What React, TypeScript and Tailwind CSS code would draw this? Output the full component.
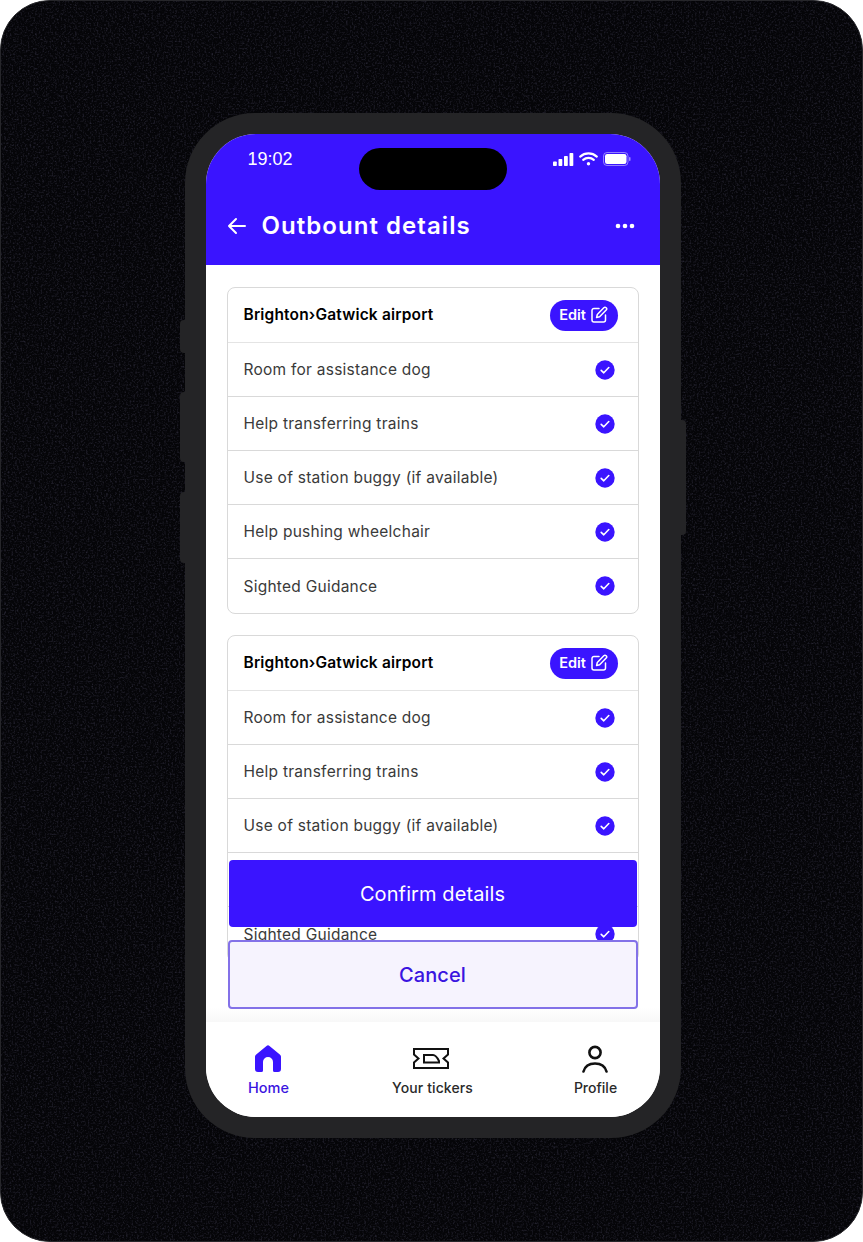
import React from "react";

const BLUE = "#3a14ff";

function Check() {
  return (
    <svg width="20" height="20" viewBox="0 0 20 20" className="shrink-0">
      <circle cx="10" cy="10" r="9.7" fill={BLUE} />
      <path d="M6.200 10.300l2.600 2.500 5-5.300" fill="none" stroke="#fff" strokeWidth="1.600" strokeLinecap="round" strokeLinejoin="round" />
    </svg>
  );
}

function EditIcon() {
  return (
    <svg width="18" height="18" viewBox="0 0 18 18" fill="none" stroke="#fff" strokeWidth="1.500" strokeLinecap="round" strokeLinejoin="round">
      <path d="M9 2.500H4a2 2 0 0 0-2 2V14a2 2 0 0 0 2 2h9.500a2 2 0 0 0 2-2V9" />
      <path d="M13.800 1.800a1.600 1.600 0 0 1 2.400 2.300L9.600 10.800l-3 .7.700-3z" />
    </svg>
  );
}

function Row({ label, last }: { label: string; last?: boolean }) {
  return (
    <div className={`flex h-[54px] shrink-0 items-center justify-between pl-4 pr-[23px] ${last ? "" : "border-b border-[#d9d9d9]"}`}>
      <span className="pt-[1px] text-[15.500px] tracking-[0.25px] text-[#3a3a3a]">{label}</span>
      <Check />
    </div>
  );
}

function Card() {
  const items = ["Room for assistance dog", "Help transferring trains", "Use of station buggy (if available)", "Help pushing wheelchair", "Sighted Guidance"];
  return (
    <section className="w-[412px] shrink-0 overflow-hidden rounded-lg border border-[#d9d9d9] bg-white">
      <div className="flex h-[55px] items-center justify-between border-b border-[#e4e4e4] pl-4 pr-5">
        <span className="text-[15.500px] font-semibold tracking-[0.17px] text-black">Brighton›Gatwick airport</span>
        <span className="flex h-[31px] w-[68px] items-center justify-center gap-[4px] rounded-full bg-[#3a14ff] text-[14.500px] font-semibold text-white">
          Edit
          <EditIcon />
        </span>
      </div>
      {items.map((t, i) => (
        <Row key={t} label={t} last={i === items.length - 1} />
      ))}
    </section>
  );
}

function Ticket() {
  return (
    <svg width="36" height="21" viewBox="0 0 36 21" fill="none" stroke="#111" strokeWidth="2">
      <path d="M1 1h34v5.500l-4.500 4 4.500 4V20H1v-5.500l4.500-4L1 6.500z" />
      <path d="M11 7h9q3 0 6 6v1.500H11z" />
    </svg>
  );
}

function Home() {
  return (
    <svg width="26" height="28" viewBox="0 0 26 28">
      <path
        fill={BLUE}
        d="M11.500 1a2.300 2.300 0 0 1 3 0l10 8.300A3 3 0 0 1 26 11.600V24a3 3 0 0 1-3 3h-3.500a1.500 1.500 0 0 1-1.500-1.500V17a5 5 0 0 0-10 0v8.500A1.500 1.500 0 0 1 6.500 27H3a3 3 0 0 1-3-3V11.600a3 3 0 0 1 1.500-2.300z"
      />
    </svg>
  );
}

function Profile() {
  return (
    <svg width="28" height="28" viewBox="0 0 28 28" fill="none" stroke="#111" strokeWidth="2.600" strokeLinecap="round">
      <circle cx="14" cy="7.500" r="5.600" />
      <path d="M2.500 26.500c1.500-5.500 6-8 11.500-8s10 2.500 11.500 8" />
    </svg>
  );
}

function StatusIcons() {
  return (
    <div className="flex items-center gap-[5px]">
      <svg width="21" height="13" viewBox="0 0 21 13" fill="#fff">
        <rect x="0" y="8.500" width="3.800" height="4.500" rx="0.800" />
        <rect x="5.500" y="6" width="3.800" height="7" rx="0.800" />
        <rect x="11" y="3" width="3.800" height="10" rx="0.800" />
        <rect x="16.500" y="0" width="3.800" height="13" rx="0.800" />
      </svg>
      <svg width="19" height="14" viewBox="0 0 19 14" fill="none" stroke="#fff" strokeWidth="2.200" strokeLinecap="round">
        <path d="M1.200 4.600C6 .4 13 .4 17.800 4.600" />
        <path d="M4.200 7.800c3-2.600 7.600-2.600 10.600 0" />
        <circle cx="9.500" cy="11.700" r="1.700" fill="#fff" stroke="none" />
      </svg>
      <svg width="28" height="14" viewBox="0 0 28 14">
        <rect x="0.500" y="0.500" width="24.500" height="13" rx="3.500" fill="none" stroke="#fff" strokeOpacity="0.450" />
        <rect x="2" y="2" width="21.500" height="10" rx="2.200" fill="#fff" />
        <rect x="26" y="5" width="1.500" height="4" rx="0.700" fill="#fff" fillOpacity="0.500" />
      </svg>
    </div>
  );
}

export default function App() {
  return (
    <div className="relative flex h-[1242px] w-[863px] items-start justify-center overflow-hidden bg-white pt-[113px] [font-family:Inter,'Noto_Sans',sans-serif]">
      <div className="absolute inset-0 overflow-hidden rounded-[50px] border border-[#26262a] bg-[#050508]">
        <svg width="863" height="1242" className="opacity-50">
          <filter id="grain">
            <feTurbulence type="fractalNoise" baseFrequency="0.55" numOctaves="2" seed="4" />
            <feColorMatrix values="0 0 0 0 0.13  0 0 0 0 0.12  0 0 0 0 0.22  1.600 0 0 0 -0.750" />
          </filter>
          <rect width="863" height="1242" filter="url(#grain)" />
        </svg>
      </div>

      <div className="relative ml-[2px] h-[1025px] w-[496px] rounded-[70px] bg-[#242426] p-[21px]">
        <span className="absolute left-[-5px] top-[207px] h-[33px] w-[5px] rounded-l-sm bg-[#242426]" />
        <span className="absolute left-[-5px] top-[279px] h-[70px] w-[5px] rounded-l-sm bg-[#242426]" />
        <span className="absolute left-[-5px] top-[379px] h-[71px] w-[5px] rounded-l-sm bg-[#242426]" />
        <span className="absolute right-[-5px] top-[307px] h-[115px] w-[5px] rounded-r-sm bg-[#242426]" />

        <div className="relative flex h-[983px] w-[454px] flex-col overflow-hidden rounded-[50px] bg-white">
          <header className="relative h-[131px] shrink-0 bg-[#3a14ff] text-white">
            <div className="flex h-[50px] items-center justify-between pl-[42px] pr-[29px]">
              <span className="pt-[1px] text-[18px] [font-family:'Liberation_Sans',sans-serif]">19:02</span>
              <StatusIcons />
            </div>
            <div className="absolute left-[153px] top-[14px] h-[42px] w-[148px] rounded-full bg-black" />
            <div className="flex h-[46px] items-center justify-between pl-[21px] pr-[25px] pt-[38px]">
              <div className="flex items-center gap-[15px]">
                <svg width="20" height="18" viewBox="0 0 20 18" fill="none" stroke="#fff" strokeWidth="2" strokeLinecap="round" strokeLinejoin="round">
                  <path d="M18 9H2M9 2L2 9l7 7" />
                </svg>
                <h1 className="text-[24px] font-semibold tracking-[1.050px] text-white">Outbount details</h1>
              </div>
              <svg width="20" height="6" viewBox="0 0 20 6" fill="#fff">
                <circle cx="3" cy="3" r="2.300" />
                <circle cx="10" cy="3" r="2.300" />
                <circle cx="17" cy="3" r="2.300" />
              </svg>
            </div>
          </header>

          <main className="relative min-h-0 flex-1 overflow-hidden">
            <div className="flex flex-col gap-[21px] pl-[21px] pt-[22px]">
              <Card />
              <Card />
            </div>
            <div className="absolute bottom-0 left-0 right-0 h-[14px] bg-gradient-to-b from-white to-[#f8f8f8]" />
            <div className="absolute left-[22px] top-[595px] flex w-[410px] flex-col">
              <button className="ml-px h-[67px] w-[408px] rounded-[4px] bg-[#3a14ff] pt-[1px] text-[20px] tracking-[0.1px] text-white">Confirm details</button>
              <button className="mt-[13px] h-[69px] w-[410px] rounded-[4px] border-2 border-[#8371e8] bg-[#f6f3fe] pt-[1px] text-[20px] font-medium tracking-[0.1px] text-[#3a14e0]">Cancel</button>
            </div>
          </main>

          <nav className="flex h-[95px] shrink-0 items-start justify-between bg-white pl-[41px] pr-[43px] pt-[22px]">
            <div className="flex w-[42px] flex-col items-center">
              <div className="flex h-[30px] items-center"><Home /></div>
              <span className="ml-[2px] mt-[3px] whitespace-nowrap text-[14.500px] font-medium text-[#3a14e0]">Home</span>
            </div>
            <div className="flex w-[82px] flex-col items-center">
              <div className="ml-[1px] flex h-[28px] items-center"><Ticket /></div>
              <span className="ml-[4px] mt-[5px] whitespace-nowrap text-[14px] font-medium tracking-[0.1px] text-[#2a2a2a]">Your tickers</span>
            </div>
            <div className="flex w-[44px] flex-col items-center">
              <div className="flex h-[30px] items-center"><Profile /></div>
              <span className="ml-[2px] mt-[3px] whitespace-nowrap text-[14px] font-medium text-[#2a2a2a]">Profile</span>
            </div>
          </nav>
        </div>
      </div>
    </div>
  );
}
